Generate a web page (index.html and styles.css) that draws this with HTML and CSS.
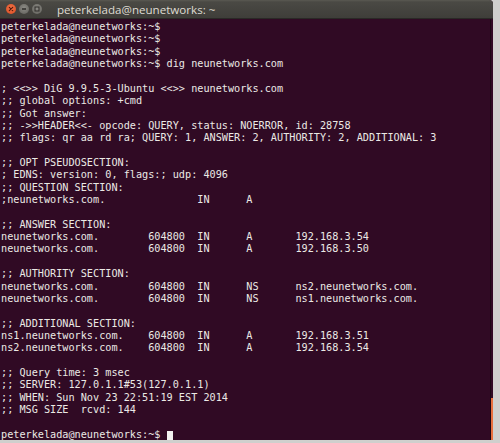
FILE: index.html
```html
<!DOCTYPE html>
<html>
<head>
<meta charset="utf-8">
<link rel="stylesheet" href="styles.css">
</head>
<body>
<div class="window">
  <div class="titlebar">
    <div class="buttons">
      <span class="btn close"><svg viewBox="0 0 10 10" width="10" height="10"><path d="M3.3 3.3 L6.7 6.7 M6.7 3.3 L3.3 6.7" stroke="#5a1a0c" stroke-width="1.2" stroke-linecap="round"/></svg></span>
      <span class="btn"><svg viewBox="0 0 10 10" width="10" height="10"><path d="M3 5 H7" stroke="#2e2d2a" stroke-width="1.3"/></svg></span>
      <span class="btn"><svg viewBox="0 0 10 10" width="10" height="10"><rect x="3" y="3" width="4" height="4" fill="none" stroke="#2e2d2a" stroke-width="1"/></svg></span>
    </div>
    <div class="title">peterkelada@neunetworks: ~</div>
  </div>
  <div class="body">
<pre class="term">peterkelada@neunetworks:~$
peterkelada@neunetworks:~$
peterkelada@neunetworks:~$
peterkelada@neunetworks:~$ dig neunetworks.com

; &lt;&lt;&gt;&gt; DiG 9.9.5-3-Ubuntu &lt;&lt;&gt;&gt; neunetworks.com
;; global options: +cmd
;; Got answer:
;; -&gt;&gt;HEADER&lt;&lt;- opcode: QUERY, status: NOERROR, id: 28758
;; flags: qr aa rd ra; QUERY: 1, ANSWER: 2, AUTHORITY: 2, ADDITIONAL: 3

;; OPT PSEUDOSECTION:
; EDNS: version: 0, flags:; udp: 4096
;; QUESTION SECTION:
;neunetworks.com.		IN	A

;; ANSWER SECTION:
neunetworks.com.	604800	IN	A	192.168.3.54
neunetworks.com.	604800	IN	A	192.168.3.50

;; AUTHORITY SECTION:
neunetworks.com.	604800	IN	NS	ns2.neunetworks.com.
neunetworks.com.	604800	IN	NS	ns1.neunetworks.com.

;; ADDITIONAL SECTION:
ns1.neunetworks.com.	604800	IN	A	192.168.3.51
ns2.neunetworks.com.	604800	IN	A	192.168.3.54

;; Query time: 3 msec
;; SERVER: 127.0.1.1#53(127.0.1.1)
;; WHEN: Sun Nov 23 22:51:19 EST 2014
;; MSG SIZE  rcvd: 144

peterkelada@neunetworks:~$ <span class="cursor"> </span></pre>
    <div class="scrollbar"><div class="thumb"></div></div>
  </div>
</div>
</body>
</html>
```
FILE: styles.css
```css
html, body {
  margin: 0;
  padding: 0;
}
body {
  background: #cfcfcd;
  width: 500px;
  height: 443px;
  overflow: hidden;
}
.window {
  width: 493px;
  height: 440px;
  display: flex;
  flex-direction: column;
  background: #300a24;
  border-top-right-radius: 4px;
  overflow: hidden;
}
.titlebar {
  height: 19px;
  flex: 0 0 19px;
  display: flex;
  align-items: center;
  background: linear-gradient(#5a5952 0px, #4a4944 2px, #3e3d39 19px);
  border-bottom: 1px solid #2a2926;
  box-sizing: border-box;
}
.buttons {
  display: flex;
  gap: 3px;
  padding-left: 6px;
  width: 46px;
}
.btn {
  width: 10px;
  height: 10px;
  border-radius: 50%;
  background: radial-gradient(circle at 50% 40%, #8d8c86, #5f5e59);
  display: flex;
}
.btn.close {
  background: radial-gradient(circle at 50% 40%, #f0764a, #d9481e);
}
.title {
  padding-left: 5px;
  font-family: "Open Sans", "DejaVu Sans", sans-serif;
  font-size: 11.6px;
  color: #dfdbd2;
  line-height: 19px;
}
.body {
  flex: 1;
  display: flex;
  min-height: 0;
}
.term {
  flex: 1;
  margin: 0;
  padding: 2px 0 0 1px;
  font-family: "DejaVu Sans Mono", monospace;
  font-size: 10.2px;
  line-height: 12.36px;
  color: #ebe9e5;
  tab-size: 8;
  -moz-tab-size: 8;
  white-space: pre;
  overflow: hidden;
}
.cursor {
  display: inline-block;
  width: 6px;
  height: 11px;
  background: #f2f2f0;
  vertical-align: -2px;
}
.scrollbar {
  width: 2px;
  display: flex;
  flex-direction: column;
  justify-content: flex-end;
  background: #300a24;
  border-left: 1px solid #1c0615;
}
.thumb {
  height: 42px;
  background: #e8703f;
}
```
